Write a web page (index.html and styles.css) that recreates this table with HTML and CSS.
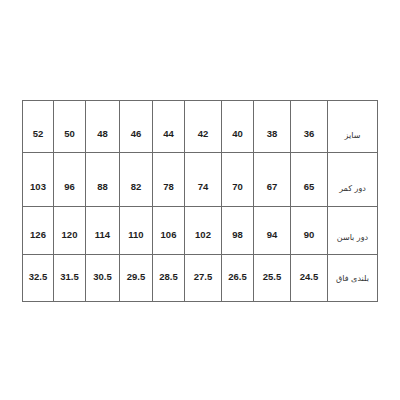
FILE: index.html
```html
<!DOCTYPE html>
<html lang="fa">
<head>
<meta charset="utf-8">
<link rel="stylesheet" href="styles.css">
</head>
<body>
<table class="sizes" dir="rtl">
  <colgroup>
    <col class="c-label">
    <col class="c37"><col class="c37"><col class="c32"><col class="c37"><col class="c32">
    <col class="c33"><col class="c34"><col class="c32"><col class="c31">
  </colgroup>
  <tr class="r1">
    <td class="label">سایز</td>
    <td>36</td><td>38</td><td>40</td><td>42</td><td>44</td><td>46</td><td>48</td><td>50</td><td>52</td>
  </tr>
  <tr class="r2">
    <td class="label">دور کمر</td>
    <td>65</td><td>67</td><td>70</td><td>74</td><td>78</td><td>82</td><td>88</td><td>96</td><td>103</td>
  </tr>
  <tr class="r3">
    <td class="label">دور باسن</td>
    <td>90</td><td>94</td><td>98</td><td>102</td><td>106</td><td>110</td><td>114</td><td>120</td><td>126</td>
  </tr>
  <tr class="r4">
    <td class="label">بلندی فاق</td>
    <td>24.5</td><td>25.5</td><td>26.5</td><td>27.5</td><td>28.5</td><td>29.5</td><td>30.5</td><td>31.5</td><td>32.5</td>
  </tr>
</table>
</body>
</html>
```

FILE: styles.css
```css
html, body {
  margin: 0;
  padding: 0;
  background: #fff;
}
body {
  padding: 100px 0 0 22px;
}
.sizes {
  border-collapse: collapse;
  table-layout: fixed;
  width: 354px;
  font-family: "Liberation Sans", Arial, sans-serif;
  font-size: 9.5px;
  font-weight: bold;
  color: #1e1e1e;
}
.c-label { width: 50px; }
.c37 { width: 37px; }
.c34 { width: 34px; }
.c33 { width: 33px; }
.c32 { width: 32px; }
.c31 { width: 31px; }
.sizes td {
  border: 1px solid #6c6c6c;
  text-align: center;
  vertical-align: top;
  padding: 0;
  line-height: 12px;
}
.sizes td.label {
  font-family: "DejaVu Sans", sans-serif;
  font-weight: normal;
  font-size: 8px;
  color: #333;
}
.r1 td { height: 52px; padding-top: 27px; box-sizing: border-box; }
.r2 td { height: 54px; padding-top: 28px; box-sizing: border-box; }
.r3 td { height: 48px; padding-top: 22px; box-sizing: border-box; }
.r4 td { height: 47px; padding-top: 16px; box-sizing: border-box; }
.r1 td.label { padding-top: 29px; }
.r2 td.label { padding-top: 30px; }
.r3 td.label { padding-top: 25px; }
.r4 td.label { padding-top: 18px; }
```
